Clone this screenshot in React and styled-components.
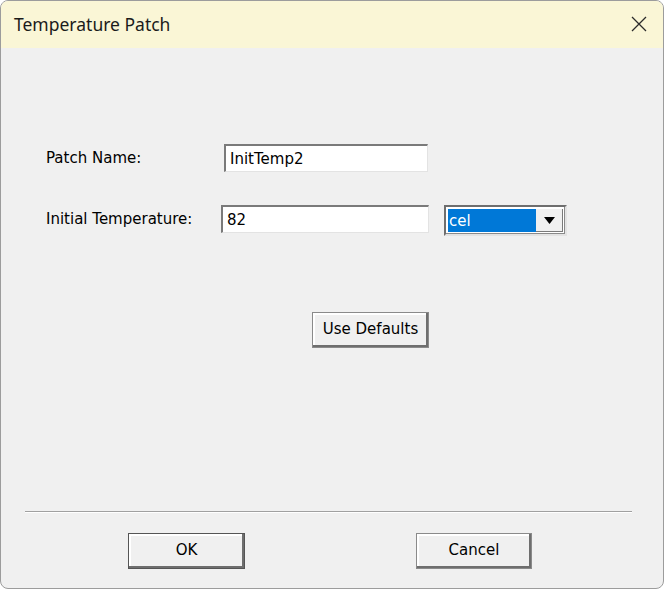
import React from "react";
import styled, { createGlobalStyle } from "styled-components";

const GlobalStyle = createGlobalStyle`
  html, body {
    margin: 0;
    padding: 0;
    background: #ffffff;
  }
  * {
    box-sizing: border-box;
  }
`;

export default function App() {
  return (
    <>
      <GlobalStyle />
      <Window>
        <TitleBar>
          <Title>Temperature Patch</Title>
          <CloseButton>
            <svg width="16" height="16" viewBox="0 0 16 16">
              <path d="M1 1 L15 15 M15 1 L1 15" stroke="#2b2b2b" strokeWidth="1.3" fill="none" />
            </svg>
          </CloseButton>
        </TitleBar>
        <Body>
          <FormRow $top={96}>
            <Label $width={179}>Patch Name:</Label>
            <TextField $width={204} defaultValue="InitTemp2" />
          </FormRow>
          <FormRow $top={33}>
            <Label $width={176}>Initial Temperature:</Label>
            <TextField $width={208} defaultValue="82" />
            <Combo>
              <ComboValue>cel</ComboValue>
              <ComboArrow>
                <svg width="11" height="7" viewBox="0 0 11 7">
                  <path d="M0 0 L11 0 L5.5 7 Z" fill="#000" />
                </svg>
              </ComboArrow>
            </Combo>
          </FormRow>
          <DefaultsRow>
            <DialogButton $width={117}>Use Defaults</DialogButton>
          </DefaultsRow>
          <Separator />
          <ButtonRow>
            <DialogButton $width={117} $default>OK</DialogButton>
            <DialogButton $width={116}>Cancel</DialogButton>
          </ButtonRow>
        </Body>
      </Window>
    </>
  );
}

//styled components
const Window = styled.div`
  width: 664px;
  height: 589px;
  border: 1px solid #9c9c9c;
  border-radius: 8px;
  overflow: hidden;
  display: flex;
  flex-direction: column;
  background: #f0f0f0;
`;

const TitleBar = styled.div`
  height: 47px;
  flex-shrink: 0;
  background: #faf6d6;
  display: flex;
  align-items: center;
  justify-content: space-between;
  padding: 0 16px 0 13px;
`;

const Title = styled.span`
  font-family: "Noto Sans", "Open Sans", sans-serif;
  font-size: 17.5px;
  color: #1b1b1b;
  margin-top: -2px;
`;

const CloseButton = styled.div`
  width: 16px;
  height: 16px;
  display: flex;
  margin-top: -1px;
`;

const Body = styled.div`
  flex: 1;
  display: flex;
  flex-direction: column;
  font-family: "DejaVu Sans", Verdana, sans-serif;
  font-size: 15px;
  color: #000;
`;

const FormRow = styled.div`
  display: flex;
  align-items: flex-start;
  margin-top: ${(p) => p.$top}px;
  padding-left: 44px;
`;

const Label = styled.label`
  width: ${(p) => p.$width}px;
  height: 28px;
  display: flex;
  align-items: center;
  padding-left: 1px;
`;

const TextField = styled.input`
  width: ${(p) => p.$width}px;
  height: 28px;
  background: #fff;
  border-style: solid;
  border-width: 2px 1px 1px 2px;
  border-color: #7a7a7a #e3e3e3 #e3e3e3 #7a7a7a;
  font: inherit;
  color: #000;
  padding: 1px 0 0 4px;
  outline: none;
`;

const Combo = styled.div`
  margin-left: 15px;
  width: 123px;
  height: 31px;
  display: flex;
  padding: 2px;
  border-style: solid;
  border-width: 2px;
  border-color: #6e6e6e #e3e3e3 #e3e3e3 #6e6e6e;
  box-shadow: inset -1px -1px 0 #8a8a8a;
  background: #fff;
`;

const ComboValue = styled.div`
  flex: 1;
  background: #0078d7;
  color: #fff;
  display: flex;
  align-items: center;
  padding-left: 1px;
`;

const ComboArrow = styled.div`
  width: 27px;
  background: #f0f0f0;
  display: flex;
  align-items: center;
  justify-content: center;
  border-right: 1px solid #7a7a7a;
  border-bottom: 1px solid #7a7a7a;
`;

const DefaultsRow = styled.div`
  display: flex;
  margin-top: 76px;
  padding-left: 311px;
`;

const DialogButton = styled.button`
  width: ${(p) => p.$width}px;
  height: 36px;
  background: #f0f0f0;
  font-family: "DejaVu Sans", Verdana, sans-serif;
  font-size: 15px;
  color: #000;
  border: 1px solid ${(p) => (p.$default ? "#555" : "#8a8a8a")};
  box-shadow: inset -2px -2px 0 #6e6e6e, inset 2px 2px 0 #ffffff;
  padding: 0 0 2px 0;
`;

const Separator = styled.div`
  margin: 163px 31px 0 24px;
  height: 2px;
  border-top: 1px solid #a0a0a0;
  border-bottom: 1px solid #ffffff;
`;

const ButtonRow = styled.div`
  display: flex;
  justify-content: space-between;
  margin-top: 20px;
  padding: 0 131px 0 127px;
`;
